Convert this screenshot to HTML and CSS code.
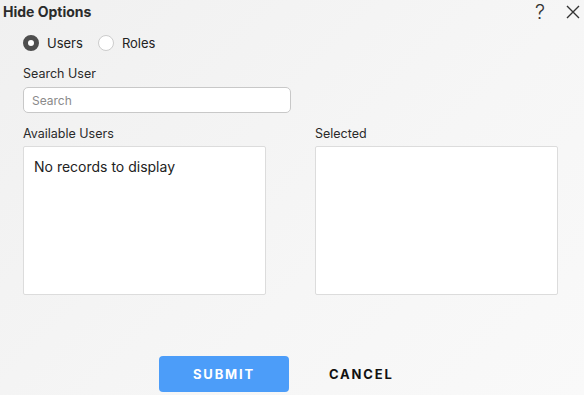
FILE: index.html
```html
<!DOCTYPE html>
<html lang="en">
  <head>
    <meta charset="UTF-8" />
    <title>Hide Options</title>
    <link rel="stylesheet" href="styles.css">
  </head>
  <body>
    <div class="dialog">
      <div class="header">
        <h1 class="title">Hide Options</h1>
        <div class="tools">
          <span class="help">?</span>
          <svg class="close" width="14" height="14" viewBox="0 0 14 14">
            <path d="M1 1 L13 13 M13 1 L1 13" stroke="#333" stroke-width="1.4" fill="none" />
          </svg>
        </div>
      </div>

      <div class="radios">
        <label class="radio"><span class="dot checked"></span>Users</label>
        <label class="radio"><span class="dot"></span>Roles</label>
      </div>

      <div class="field">
        <p class="label">Search User</p>
        <input class="search" type="text" placeholder="Search">
      </div>

      <div class="lists">
        <div class="list">
          <p class="label">Available Users</p>
          <div class="box"><span class="empty">No records to display</span></div>
        </div>
        <div class="list">
          <p class="label">Selected</p>
          <div class="box"></div>
        </div>
      </div>

      <div class="actions">
        <button class="submit">SUBMIT</button>
        <button class="cancel">CANCEL</button>
      </div>
    </div>
  </body>
</html>
```

FILE: styles.css
```css
* { font-family: 'Inter', sans-serif; box-sizing: border-box; }
body { margin: 0; background: linear-gradient(135deg, #f0f0f0 0%, #f6f6f6 60%, #f9f9f9 100%); color: #222; height: 395px; }

.dialog { width: 584px; height: 395px; padding: 0 0 0 23px; display: flex; flex-direction: column; }

.header { display: flex; justify-content: space-between; align-items: center; margin-left: -20px; height: 22px; padding-top: 1px; }
.title { font-size: 14px; font-weight: 700; margin: 0; color: #2b2b2b; }
.tools { display: flex; align-items: center; gap: 21px; padding-right: 4px; }
.help { font-size: 20px; font-weight: 300; color: #333; line-height: 20px; }
.close { display: block; }

.radios { display: flex; gap: 7px; margin-top: 13px; height: 16px; align-items: center; }
.radio { display: flex; align-items: center; gap: 8px; font-size: 13px; color: #222; margin-right: 8px; }
.dot { width: 16px; height: 16px; border-radius: 50%; border: 1px solid #ccc; background: #fff; display: block; }
.dot.checked { border: 5px solid #4e4e4e; background: #fff; }

.label { font-size: 12.5px; margin: 0; color: #2a2a2a; line-height: 14px; }

.field { margin-top: 16px; }
.search { margin-top: 6px; width: 268px; height: 26px; border: 1px solid #c8c8c8; border-radius: 5px; background: #fff; padding: 0 8px; font-size: 12px; }
.search::placeholder { color: #8a8a8a; }

.lists { display: flex; gap: 49px; margin-top: 14px; }
.list { width: 243px; }
.box { margin-top: 5px; height: 149px; background: #fff; border: 1px solid #dcdcdc; border-radius: 2px; padding: 9px 10px; }
.empty { font-size: 14px; color: #222; }

.actions { display: flex; align-items: center; margin-top: 61px; margin-left: 136px; gap: 40px; }
.actions button { font-size: 13px; font-weight: 700; letter-spacing: 1.8px; border: none; cursor: pointer; }
.submit { width: 130px; height: 36px; background: #4c9df9; color: #fff; border-radius: 4px; }
.cancel { background: none; color: #111; padding: 0; }
```
